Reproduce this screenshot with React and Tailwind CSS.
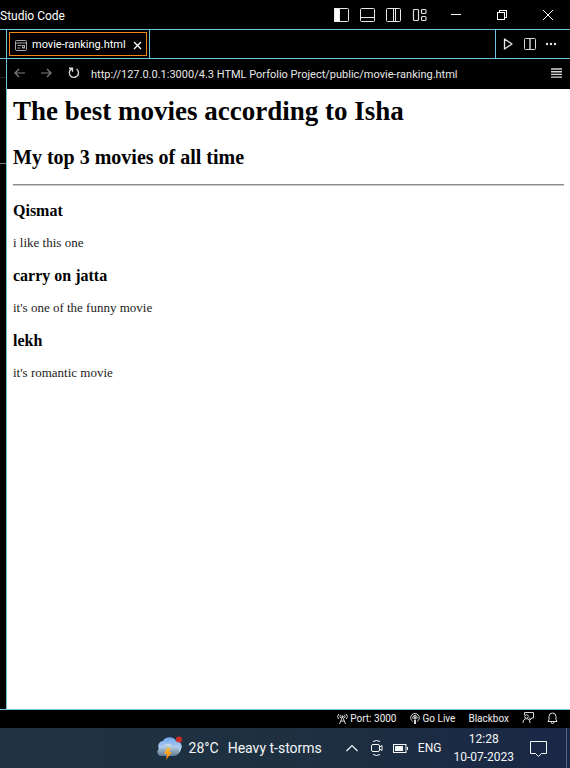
import React from "react";

const LINE = "border-[#6fc3df]";

function Icon({ label, className = "", children }) {
  return (
    <button type="button" aria-label={label} className={`flex shrink-0 items-center justify-center ${className}`}>
      {children}
    </button>
  );
}

function TitleBar() {
  return (
    <header className="flex h-[29px] shrink-0 items-center justify-between bg-black text-white">
      <span className="pt-[3px] text-[12px] leading-4 whitespace-nowrap">Studio Code</span>
      <div className="flex h-full items-center">
        <Icon label="Toggle primary side bar" className="h-full w-[26px]">
          <svg width="16" height="16" viewBox="0 0 16 16" fill="none" stroke="#e8e8e8">
            <rect x="1.500" y="1.500" width="14" height="13" rx="1" />
            <rect x="1.500" y="1.500" width="5" height="13" fill="#fff" />
          </svg>
        </Icon>
        <Icon label="Toggle panel" className="h-full w-[26px]">
          <svg width="16" height="16" viewBox="0 0 16 16" fill="none" stroke="#e8e8e8">
            <rect x="1.500" y="1.500" width="14" height="13" rx="1" />
            <path d="M1.500 10.500h14" />
          </svg>
        </Icon>
        <Icon label="Toggle secondary side bar" className="h-full w-[26px]">
          <svg width="16" height="16" viewBox="0 0 16 16" fill="none" stroke="#e8e8e8">
            <rect x="1.500" y="1.500" width="14" height="13" rx="1" />
            <path d="M8.500 1.500v13M10.500 1.500v13" />
          </svg>
        </Icon>
        <Icon label="Customize layout" className="h-full w-[27px]">
          <svg width="16" height="16" viewBox="0 0 16 16" fill="none" stroke="#e0e0e0" strokeWidth="1.200">
            <rect x="1.500" y="2.500" width="5" height="11" rx="1" />
            <rect x="9.500" y="2.500" width="4.500" height="4" rx="1" />
            <rect x="9.500" y="9.500" width="4.500" height="4" rx="1" />
          </svg>
        </Icon>
        <Icon label="Minimize" className="h-full w-[46px]">
          <svg width="10" height="10" viewBox="0 0 10 10" stroke="#fff" shapeRendering="crispEdges">
            <path d="M0 4.500h10" />
          </svg>
        </Icon>
        <Icon label="Restore" className="h-full w-[46px]">
          <svg width="10" height="10" viewBox="0 0 10 10" fill="none" stroke="#fff" shapeRendering="crispEdges">
            <rect x="0.5" y="2.5" width="7" height="7" />
            <path d="M2.5 2.5v-2h7v7h-2" />
          </svg>
        </Icon>
        <Icon label="Close" className="h-full w-[45px]">
          <svg width="10" height="10" viewBox="0 0 10 10" stroke="#fff">
            <path d="M0 0l10 10M10 0L0 10" />
          </svg>
        </Icon>
      </div>
    </header>
  );
}

function TabBar() {
  return (
    <div className={`flex h-[30px] shrink-0 border-y bg-black ${LINE}`}>
      <div className={`flex border-r p-[2px] ${LINE}`}>
        <div className="flex items-center border border-[#f38518] pt-[2px] pr-[4px] pl-[5px] text-white">
          <svg width="12" height="11" viewBox="0 0 12 11" fill="none" stroke="#a8a8a8">
            <rect x="0.5" y="0.5" width="11" height="10" rx="1" />
            <path d="M1 3h10M2.5 5.5h4M2.5 8h3" />
            <rect x="7.5" y="5.5" width="2" height="2.5" />
          </svg>
          <button type="button" className="pl-[5px] text-[11px] leading-4 whitespace-nowrap">movie-ranking.html</button>
          <Icon label="Close tab" className="pl-[7px]">
            <svg width="9" height="9" viewBox="0 0 9 9" stroke="#fff" strokeWidth="1.3">
              <path d="M1 1l7 7M8 1L1 8" />
            </svg>
          </Icon>
        </div>
      </div>
      <div className={`ml-auto flex items-center border-l pr-[13px] pl-[7px] ${LINE}`}>
        <Icon label="Run" className="w-[11px]">
          <svg width="11" height="12" viewBox="0 0 11 12" fill="none" stroke="#e8e8e8" strokeWidth="1.3" strokeLinejoin="round">
            <path d="M1.5 1v10L9 6z" />
          </svg>
        </Icon>
        <Icon label="Split editor" className="ml-[10px] w-[12px]">
          <svg width="12" height="12" viewBox="0 0 12 12" fill="none" stroke="#d8d8d8">
            <rect x="0.5" y="0.5" width="11" height="11" rx="1" />
            <path d="M6 1v10.500" strokeWidth="1.4" />
          </svg>
        </Icon>
        <Icon label="More actions" className="ml-[9px] w-[12px]">
          <svg width="12" height="4" viewBox="0 0 12 4" fill="#e8e8e8">
            <circle cx="2" cy="2" r="1.200" />
            <circle cx="6" cy="2" r="1.200" />
            <circle cx="10" cy="2" r="1.200" />
          </svg>
        </Icon>
      </div>
    </div>
  );
}

function AddressBar() {
  return (
    <div className="flex h-[30px] shrink-0 items-center bg-black pr-[8px] pl-[7px]">
      <Icon label="Back" className="w-[11px]">
        <svg width="11" height="12" viewBox="0 0 11 12" fill="none" stroke="#808080" strokeWidth="1.200">
          <path d="M11 5H1M5 1L1 5l4 4" />
        </svg>
      </Icon>
      <Icon label="Forward" className="ml-[16px] w-[11px]">
        <svg width="11" height="12" viewBox="0 0 11 12" fill="none" stroke="#808080" strokeWidth="1.200">
          <path d="M0 5h10M6 1l4 4-4 4" />
        </svg>
      </Icon>
      <Icon label="Reload" className="ml-[16px] w-[12px]">
        <svg width="12" height="14" viewBox="0 0 12 14" fill="none" stroke="#d8d8d8" strokeWidth="1.400">
          <path d="M1 1.200h3.500v3.500M4.300 1.500A4.600 4.600 0 1 0 8.500 2" />
        </svg>
      </Icon>
      <input
        aria-label="Address"
        readOnly
        value="http://127.0.0.1:3000/4.3 HTML Porfolio Project/public/movie-ranking.html"
        className="ml-[11px] h-5 min-w-0 flex-1 bg-transparent text-[11px] text-[#e8e8e8] outline-none"
      />
      <Icon label="Menu" className="w-[11px]">
        <svg width="11" height="12" viewBox="0 0 11 12" stroke="#d8d8d8" strokeWidth="1.400">
          <path d="M0 1h11M0 3.700h11M0 6.400h11M0 9.100h11" />
        </svg>
      </Icon>
    </div>
  );
}

const movies = [
  { title: "Qismat", note: "i like this one" },
  { title: "carry on jatta", note: "it's one of the funny movie" },
  { title: "lekh", note: "it's romantic movie" },
];

function Preview() {
  return (
    <main className="flex-1 bg-white px-[6px] pt-[6px] font-['Liberation_Serif','Times_New_Roman',serif] text-black">
      <h1 className="text-[27px] leading-8 font-bold">The best movies according to Isha</h1>
      <h2 className="mt-[18px] text-[20px] leading-6 font-bold">My top 3 movies of all time</h2>
      <hr className="mt-[15px] mb-[15px] h-[2px] border-t border-b border-t-[#8c8c8c] border-b-[#c8c8c8]" />
      {movies.map((m) => (
        <section key={m.title} className="pb-[14px]">
          <h3 className="text-[16px] leading-5 font-bold">{m.title}</h3>
          <p className="mt-[13px] text-[13px] leading-[18px] text-[#222]">{m.note}</p>
        </section>
      ))}
    </main>
  );
}

function StatusBar() {
  return (
    <footer className={`flex h-[19px] shrink-0 items-center justify-end border-t bg-black pr-[12px] text-[10px] leading-4 whitespace-nowrap text-[#f0f0f0] ${LINE}`}>
      <button type="button" className="flex items-center gap-[2px]">
        <svg width="11" height="13" viewBox="0 0 11 13" fill="none" stroke="#d8d8d8">
          <path d="M1.800 1A3.500 3.500 0 0 0 1.800 6M9.200 1a3.500 3.500 0 0 1 0 5M3.600 1.800a2.500 2.500 0 0 0 0 3.200M7.400 1.800a2.500 2.500 0 0 1 0 3.200M5.500 3.500L2.500 11M5.500 3.500l3 7.500M4 8h3" />
          <circle cx="5.500" cy="3.500" r="0.700" fill="#d8d8d8" />
        </svg>
        Port: 3000
      </button>
      <button type="button" className="ml-[13px] flex items-center gap-[3px]">
        <svg width="10" height="13" viewBox="0 0 10 13" fill="none" stroke="#d8d8d8">
          <path d="M2.800 8.500a4.300 4.300 0 1 1 4.400 0M3.300 6a2.200 2.200 0 1 1 3.400 0" />
          <circle cx="5" cy="4.600" r="0.900" fill="#d8d8d8" />
          <path d="M5 6.500V11" strokeWidth="2" />
        </svg>
        Go Live
      </button>
      <button type="button" className="ml-[13px]">Blackbox</button>
      <Icon label="Feedback" className="ml-[13px]">
        <svg width="12" height="14" viewBox="0 0 12 14" fill="none" stroke="#d8d8d8">
          <path d="M2.500 3V0.500H11.500V6H10L8 8V6H7.500" />
          <circle cx="4.500" cy="4.500" r="1.800" />
          <path d="M1 11c0-3 1.500-4.300 3.500-4.300S8 8 8 11" />
        </svg>
      </Icon>
      <Icon label="Notifications" className="ml-[13px]">
        <svg width="11" height="14" viewBox="0 0 11 14" fill="none" stroke="#e0e0e0">
          <path d="M1 9.500h9L9 7.500V4.500a3.500 3.500 0 0 0-7 0v3zM4 10a1.500 1.500 0 0 0 3 0" />
        </svg>
      </Icon>
    </footer>
  );
}

function Taskbar() {
  return (
    <nav aria-label="Taskbar" className="flex h-10 shrink-0 items-center justify-end bg-gradient-to-r from-[#1f3340] via-[#1e3040] to-[#1a2746] whitespace-nowrap text-[#f4f6f8]">
      <button type="button" className="flex items-center text-[14px] leading-5">
        <svg width="26" height="25" viewBox="0 0 26 25">
          <defs>
            <linearGradient id="cloudBack" x1="0" y1="0" x2="0" y2="1">
              <stop offset="0" stopColor="#6fa6ec" />
              <stop offset="1" stopColor="#d5e4f7" />
            </linearGradient>
            <linearGradient id="cloudFront" x1="0" y1="0" x2="0" y2="1">
              <stop offset="0" stopColor="#cfdeee" />
              <stop offset="1" stopColor="#5d7f9b" />
            </linearGradient>
            <linearGradient id="bolt" x1="0" y1="0" x2="0" y2="1">
              <stop offset="0" stopColor="#ffbe2e" />
              <stop offset="1" stopColor="#f47b0c" />
            </linearGradient>
          </defs>
          <path d="M3 15C-1 9 3 5 6 5c2-5 11-5 13 0 5 0 7 5 5 8-1 4-3 5-5 5z" fill="url(#cloudBack)" />
          <path d="M4 20c-5-1-5-8 1-8 2-5 9-5 11-1 5-1 7 2 6 5-1 3-3 4-6 4z" fill="url(#cloudFront)" />
          <path d="M10 12h4l-2 4h3l-6 8 1-6H7z" fill="url(#bolt)" />
          <circle cx="22" cy="3.500" r="3" fill="#cf2b20" />
        </svg>
        <span className="ml-[6px]">28°C</span>
        <span className="ml-[9px]">Heavy t-storms</span>
      </button>
      <Icon label="Show hidden icons" className="ml-[24px]">
        <svg width="12" height="8" viewBox="0 0 12 8" fill="none" stroke="#f4f6f8" strokeWidth="1.200">
          <path d="M0.500 7L6 1.500 11.500 7" />
        </svg>
      </Icon>
      <Icon label="Meet now" className="ml-[13px]">
        <svg width="12" height="16" viewBox="0 0 12 16" fill="none" stroke="#f4f6f8">
          <rect x="0.500" y="4.500" width="8" height="7" rx="1.500" />
          <path d="M8.500 7l2.500-1.500v5l-2.500-1.500M2 1.500Q5.500-0.500 9 1.500M2 14.500Q5.500 16.500 9 14.500" />
        </svg>
      </Icon>
      <Icon label="Battery" className="ml-[10px]">
        <svg width="15" height="9" viewBox="0 0 15 9" fill="none" stroke="#f4f6f8">
          <rect x="0.500" y="0.500" width="12.500" height="8" />
          <rect x="2" y="2" width="8" height="5" fill="#f4f6f8" stroke="none" />
          <path d="M14.500 3v3" />
        </svg>
      </Icon>
      <button type="button" className="ml-[10px] text-[12px] leading-4">ENG</button>
      <button type="button" className="ml-[12px] text-center text-[12px] leading-[18px]">
        <time className="block">12:28</time>
        <time className="block">10-07-2023</time>
      </button>
      <Icon label="Notification center" className="mr-[19px] ml-[16px]">
        <svg width="17" height="17" viewBox="0 0 17 17" fill="none" stroke="#f4f6f8">
          <path d="M0.500 1.500h16v12h-5l-3 3-3-3h-5z" />
        </svg>
      </Icon>
      <div className="h-full w-[4px] border-l border-[#5c6880]" />
    </nav>
  );
}

export default function App() {
  return (
    <div className="flex min-h-screen flex-col bg-black font-[Roboto,'Segoe_UI',sans-serif]">
      <TitleBar />
      <div className="flex flex-1">
        <aside className="flex w-[6px] shrink-0 flex-col bg-black">
          <div className={`h-[30px] border-y ${LINE}`} />
          <div className="h-[19px] border-b border-[#222]" />
          <div className="h-[86px] border-b border-[#777]" />
        </aside>
        <div className={`flex min-w-0 flex-1 flex-col border-l ${LINE}`}>
          <TabBar />
          <AddressBar />
          <Preview />
        </div>
      </div>
      <StatusBar />
      <Taskbar />
    </div>
  );
}
